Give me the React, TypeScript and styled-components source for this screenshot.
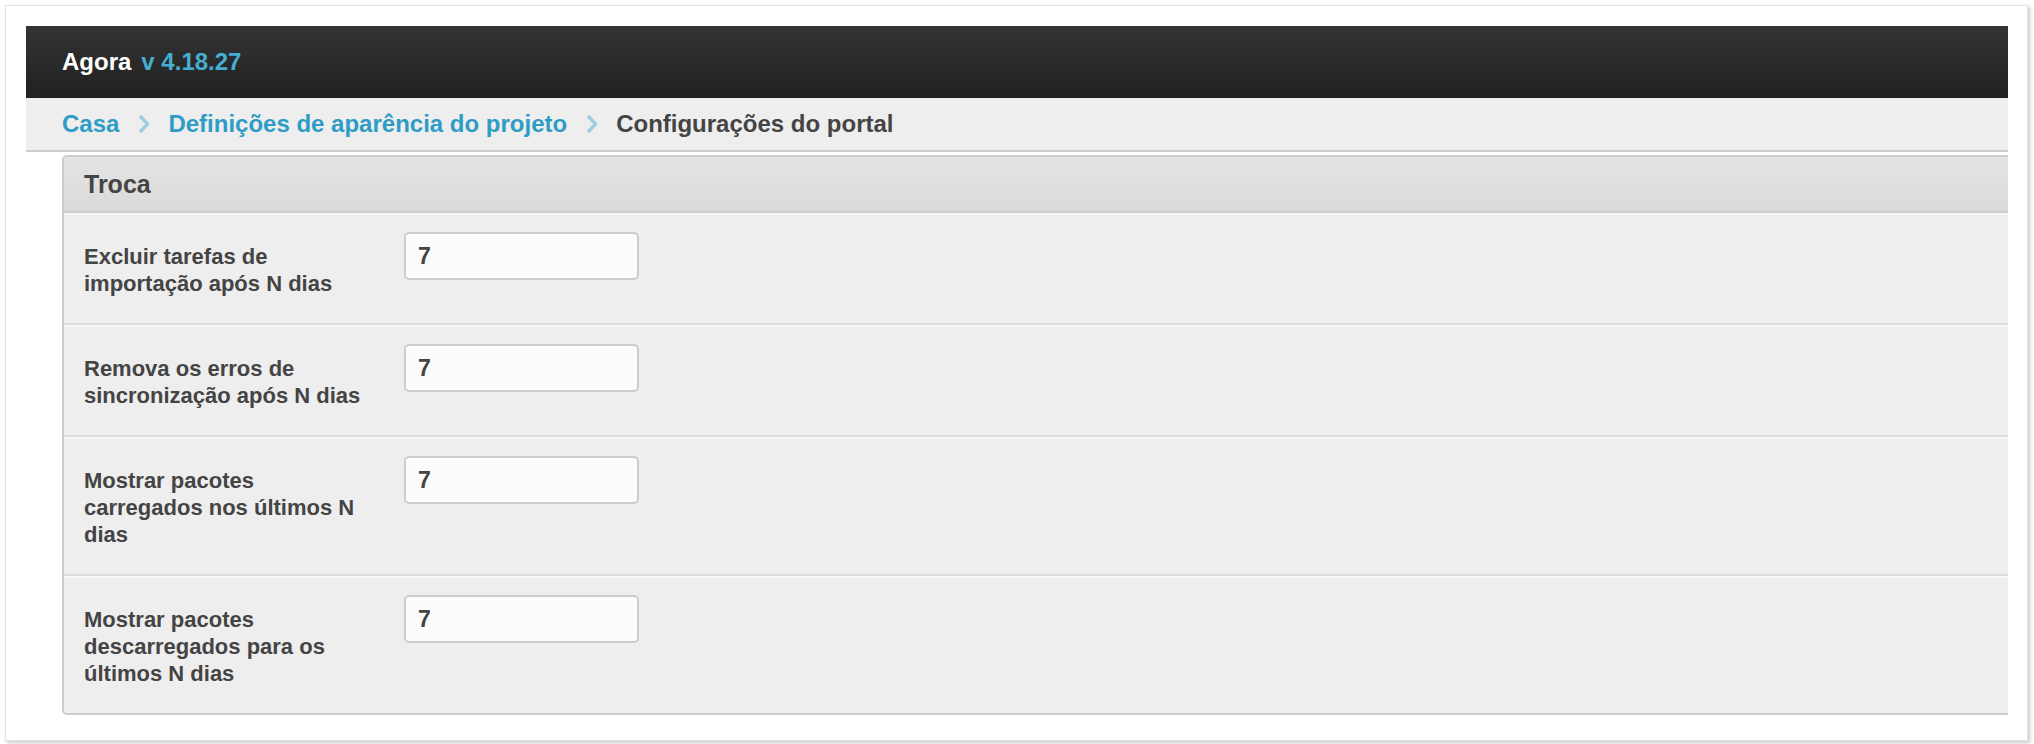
import React from "react";
import styled, { createGlobalStyle } from "styled-components";

const GlobalStyle = createGlobalStyle`
  html, body {
    margin: 0;
    padding: 0;
    background: #ffffff;
  }
  body {
    font-family: "Liberation Sans", Arial, Helvetica, sans-serif;
    color: #444444;
  }
  * { box-sizing: border-box; }
`;

const Frame = styled.div`
  margin: 5px 6px 6px 5px;
  border: 1px solid #e2e2e2;
  box-shadow: 2px 2px 4px rgba(0, 0, 0, 0.22);
  background: #ffffff;
  padding: 20px 19px 25px 20px;
`;

const TopBar = styled.header`
  height: 72px;
  display: flex;
  align-items: center;
  padding-left: 36px;
  background: linear-gradient(to bottom, #343434 0%, #202020 100%);
`;

const AppName = styled.span`
  font-size: 24px;
  font-weight: 700;
  color: #ffffff;
`;

const Version = styled.span`
  margin-left: 10px;
  font-size: 24px;
  font-weight: 700;
  color: #45aed3;
`;

const Crumbs = styled.nav`
  height: 54px;
  display: flex;
  align-items: center;
  padding-left: 36px;
  background: #eeeeee;
  border-bottom: 2px solid #cccccc;
`;

const CrumbLink = styled.a`
  font-size: 24px;
  font-weight: 700;
  color: #2f9cc6;
  text-decoration: none;
`;

const CrumbCurrent = styled.span`
  font-size: 24px;
  font-weight: 700;
  color: #444444;
`;

const CrumbSep = styled.span`
  display: inline-flex;
  align-items: center;
  margin: 0 18px 0 19px;
  height: 24px;
`;

const Content = styled.main`
  margin-top: 3px;
  padding-left: 36px;
  overflow: hidden;
`;

const Panel = styled.section`
  border: 2px solid #cccccc;
  border-right: none;
  border-radius: 5px 0 0 5px;
  background: #eeeeee;
  overflow: hidden;
`;

const PanelHead = styled.div`
  height: 56px;
  display: flex;
  align-items: center;
  padding-left: 20px;
  background: linear-gradient(to bottom, #e4e4e4 0%, #dadada 100%);
  border-bottom: 2px solid #cccccc;
`;

const PanelTitle = styled.h2`
  margin: 0;
  font-size: 25px;
  font-weight: 700;
  color: #444444;
`;

const Row = styled.div<{ $last?: boolean }>`
  display: flex;
  align-items: flex-start;
  padding: 17px 0 0 20px;
  border-top: 2px solid #f7f7f7;
  border-bottom: ${(p) => (p.$last ? "none" : "2px solid #dcdcdc")};
  background: #eeeeee;
`;

const Label = styled.label`
  width: 290px;
  margin: 11px 30px 26px 0;
  font-size: 22px;
  line-height: 27px;
  font-weight: 700;
  color: #444444;
`;

const NumberInput = styled.input`
  width: 235px;
  height: 48px;
  padding: 0 12px;
  border: 2px solid #cccccc;
  border-radius: 5px;
  background: #fcfcfc;
  font-family: "Liberation Sans", Arial, sans-serif;
  font-size: 23px;
  font-weight: 700;
  color: #444444;
  outline: none;
`;

const Chevron = () => (
  <svg width="12" height="18" viewBox="0 0 12 18" aria-hidden="true">
    <path
      d="M3 2 L9.5 9 L3 16"
      fill="none"
      stroke="#9fcde2"
      strokeWidth="3.4"
      strokeLinecap="round"
      strokeLinejoin="round"
    />
  </svg>
);

const settings = [
  { id: "imp", label: "Excluir tarefas de importação após N dias", value: "7" },
  { id: "sync", label: "Remova os erros de sincronização após N dias", value: "7" },
  { id: "up", label: "Mostrar pacotes carregados nos últimos N dias", value: "7" },
  { id: "down", label: "Mostrar pacotes descarregados para os últimos N dias", value: "7" },
];

export default function App() {
  return (
    <>
      <GlobalStyle />
      <Frame>
        <TopBar>
          <AppName>Agora</AppName>
          <Version>v 4.18.27</Version>
        </TopBar>
        <Crumbs>
          <CrumbLink href="#">Casa</CrumbLink>
          <CrumbSep>
            <Chevron />
          </CrumbSep>
          <CrumbLink href="#">Definições de aparência do projeto</CrumbLink>
          <CrumbSep>
            <Chevron />
          </CrumbSep>
          <CrumbCurrent>Configurações do portal</CrumbCurrent>
        </Crumbs>
        <Content>
          <Panel>
            <PanelHead>
              <PanelTitle>Troca</PanelTitle>
            </PanelHead>
            {settings.map((s, i) => (
              <Row key={s.id} $last={i === settings.length - 1}>
                <Label htmlFor={s.id}>{s.label}</Label>
                <NumberInput id={s.id} defaultValue={s.value} />
              </Row>
            ))}
          </Panel>
        </Content>
      </Frame>
    </>
  );
}
